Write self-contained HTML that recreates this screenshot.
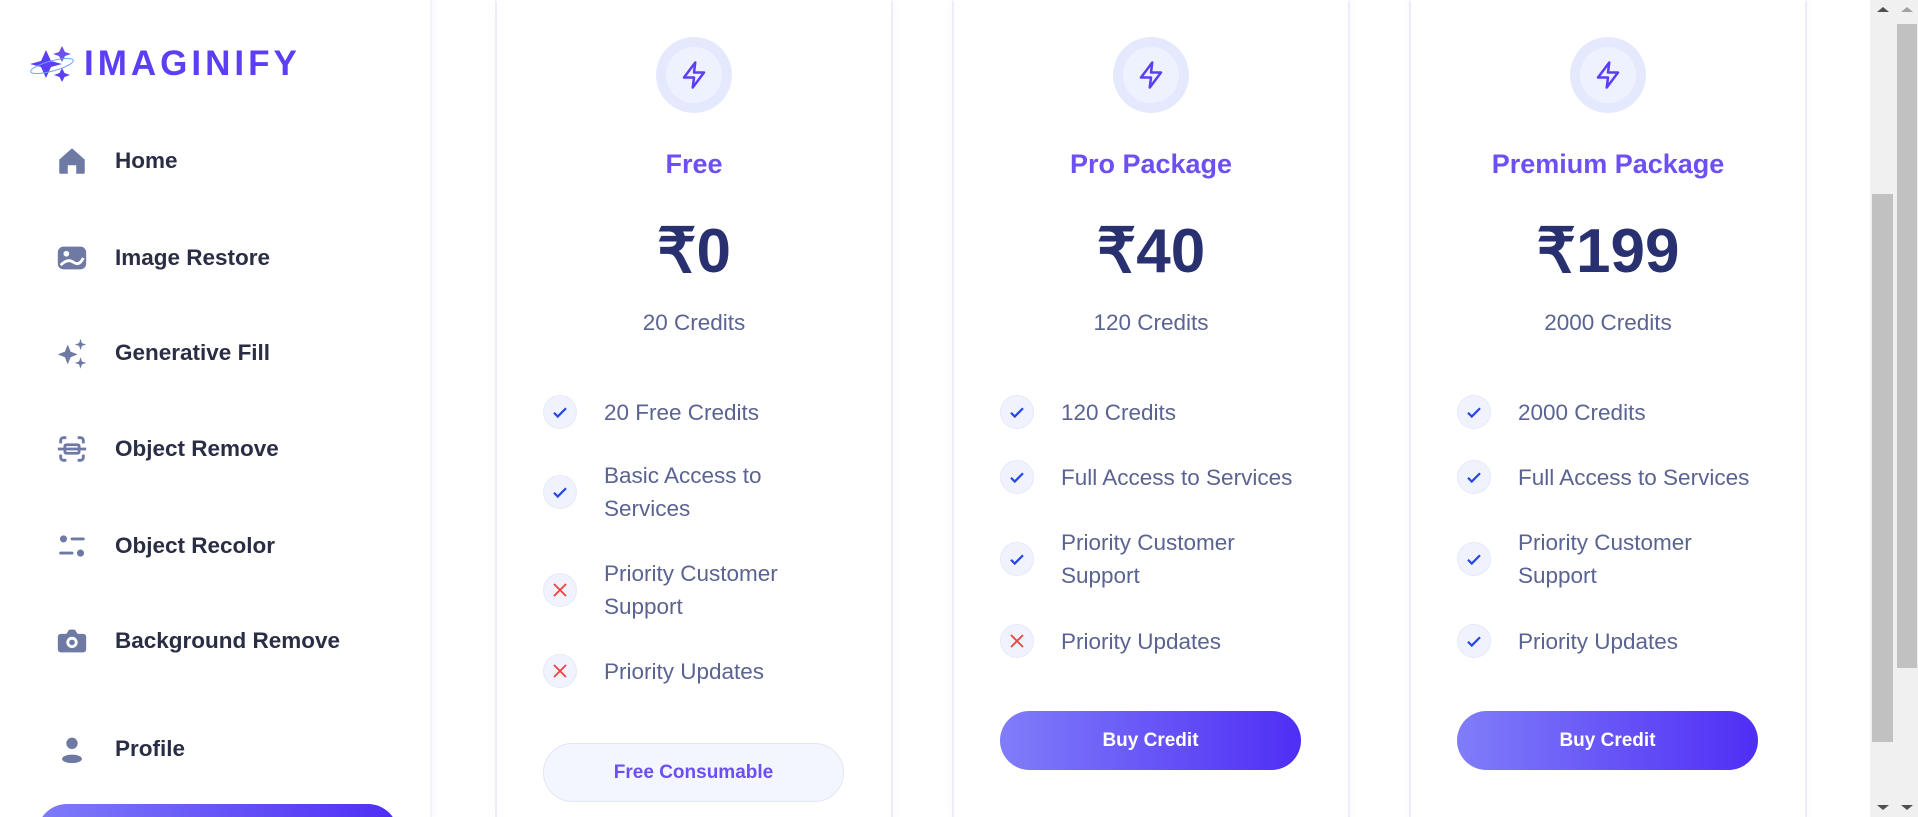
<!DOCTYPE html>
<html><head><meta charset="utf-8">
<style>
*{box-sizing:border-box;margin:0;padding:0}
html,body{width:1918px;height:817px;overflow:hidden}
body{background:#fff;font-family:"Liberation Sans",sans-serif}
#root{position:relative;width:1918px;height:817px;overflow:hidden}
.side{position:absolute;left:0;top:0;width:432px;height:817px;background:#fff;border-right:2px solid #f3f2fc;box-shadow:2px 0 6px rgba(120,110,220,.06);overflow:hidden}
.logo{position:absolute;left:30px;top:44px;display:flex;align-items:center}
.logo span{font-size:35px;font-weight:bold;color:#5b3ff5;margin-left:10px;letter-spacing:4px}
.nav{position:absolute;left:55px;display:flex;align-items:center;font-size:22.5px;font-weight:bold;color:#2a2e45}
.nav svg{width:34px;height:34px;margin-right:26px}
.gbtn{position:absolute;left:37px;top:804px;width:361px;height:13px;display:block}
.card{position:absolute;top:0;width:398px;height:817px;border:2px solid #eeecfc;border-top:2px solid transparent;border-bottom:none;background:#fff;box-shadow:0 0 10px rgba(120,110,220,.05);overflow:hidden}
.ic{position:absolute;left:159px;top:35px;width:76px;height:76px;border-radius:50%;background:#e5e9fd}
.ic div{position:absolute;left:10px;top:10px;width:56px;height:56px;border-radius:50%;background:#eef1fe;display:flex;align-items:center;justify-content:center}
.t{position:absolute;left:0;width:100%;text-align:center}
.title{top:147px;font-size:27px;font-weight:bold;color:#6d4ff3}
.price{top:212px;font-size:62px;font-weight:bold;color:#283070}
.cred{top:308px;font-size:22.5px;color:#5a6391}
.f{position:absolute;left:46px;display:flex;align-items:center;font-size:22.5px;color:#5a6391;line-height:33px}
.f .b{width:34px;height:34px;border-radius:50%;background:#f0f2fd;border:1px solid #e6e9fa;margin-right:27px;flex:none;display:flex;align-items:center;justify-content:center}
.btn{position:absolute;left:46px;width:301px;height:59px;border-radius:30px;display:flex;align-items:center;justify-content:center;font-size:19px;font-weight:bold}
.buy{background:linear-gradient(90deg,#807df9,#4f2ef5);color:#fff}
.fc{background:#f4f6fd;border:1px solid #e2e5f6;color:#6b4ff4}
.sb{position:absolute;top:0;height:817px;background:#f0f0f0}
</style></head><body><div id="root">
<div class="side">
 <div class="logo">
  <svg width="44" height="40" viewBox="0 0 44 40"><path d="M16 6 L21 17 L32 20 L21 23 L16 34 L11 23 L0 20 L11 17Z" fill="#5b3ff5"/><path d="M32 2 L35 8 L41 10 L35 12 L32 18 L29 12 L23 10 L29 8Z" fill="#6d4ff3"/><path d="M32 24 L34.5 29 L40 31 L34.5 33 L32 38 L29.5 33 L24 31 L29.5 29Z" fill="#5b3ff5"/><ellipse cx="22" cy="22" rx="22" ry="5" fill="none" stroke="#6fa0ff" stroke-width="1" transform="rotate(-15 22 22)"/></svg>
  <span>IMAGINIFY</span>
 </div>
 <div class="nav" style="top:144px"><svg viewBox="0 0 24 24"><path d="M3 11 L12 3 L21 11 V20 a1 1 0 0 1-1 1 H15 V15 H9 V21 H4 a1 1 0 0 1-1-1Z" fill="#6e7aa4"/></svg>Home</div>
 <div class="nav" style="top:241px"><svg viewBox="0 0 24 24"><rect x="2" y="4" width="20" height="16" rx="4" fill="#6e7aa4"/><circle cx="8" cy="9" r="2" fill="#fff"/><path d="M4 17 Q9 12 13 15 Q17 18 20 12" stroke="#fff" stroke-width="2" fill="none"/></svg>Image Restore</div>
 <div class="nav" style="top:336px"><svg viewBox="0 0 24 24"><path d="M9 6 L11 11 L16 13 L11 15 L9 20 L7 15 L2 13 L7 11Z M18 2 L19 5 L22 6 L19 7 L18 10 L17 7 L14 6 L17 5Z M18 15 L19 18 L22 19 L19 20 L18 23 L17 20 L14 19 L17 18Z" fill="#6e7aa4"/></svg>Generative Fill</div>
 <div class="nav" style="top:432px"><svg viewBox="0 0 24 24" fill="none" stroke="#6e7aa4" stroke-width="2"><path d="M4 8 V6 a2 2 0 0 1 2-2 H8 M16 4 H18 a2 2 0 0 1 2 2 V8 M4 16 V18 a2 2 0 0 0 2 2 H8 M16 20 H18 a2 2 0 0 0 2-2 V16 M2 12 H22"/><rect x="7" y="9" width="10" height="6" rx="1"/></svg>Object Remove</div>
 <div class="nav" style="top:529px"><svg viewBox="0 0 24 24" fill="#6e7aa4"><circle cx="6" cy="7" r="2.5"/><rect x="11" y="6" width="10" height="2" rx="1"/><rect x="3" y="16" width="10" height="2" rx="1"/><circle cx="18" cy="17" r="2.5"/></svg>Object Recolor</div>
 <div class="nav" style="top:624px"><svg viewBox="0 0 24 24"><path d="M4 7 H8 L10 4 H14 L16 7 H20 a2 2 0 0 1 2 2 V18 a2 2 0 0 1-2 2 H4 a2 2 0 0 1-2-2 V9 a2 2 0 0 1 2-2Z" fill="#6e7aa4"/><circle cx="12" cy="13" r="3" fill="none" stroke="#fff" stroke-width="2"/></svg>Background Remove</div>
 <div class="nav" style="top:732px"><svg viewBox="0 0 24 24" fill="#6e7aa4"><circle cx="12" cy="8" r="4"/><ellipse cx="12" cy="19" rx="7" ry="3"/></svg>Profile</div>
 <svg class="gbtn" viewBox="0 0 361 13"><defs><linearGradient id="g" x1="0" x2="1"><stop offset="0" stop-color="#7f7cf9"/><stop offset="1" stop-color="#4f2ef5"/></linearGradient></defs><rect x="0" y="0" width="361" height="60" rx="30" fill="url(#g)"/></svg>
</div>

<div class="card" style="left:495px">
 <div class="ic"><div><svg width="30" height="30" viewBox="0 0 24 24" fill="none" stroke="#5b3ff5" stroke-width="2" stroke-linejoin="round"><path d="M13 2 L4 14 H12 L11 22 L20 10 H12Z"/></svg></div></div>
 <div class="t title">Free</div>
 <div class="t price">₹0</div>
 <div class="t cred">20 Credits</div>
 <div class="f" style="top:393px"><div class="b"><svg width="18" height="18" viewBox="0 0 24 24" fill="none" stroke="#2546e8" stroke-width="3"><path d="M4 13 L9 18 L20 7"/></svg></div>20 Free Credits</div>
 <div class="f" style="top:457px"><div class="b"><svg width="18" height="18" viewBox="0 0 24 24" fill="none" stroke="#2546e8" stroke-width="3"><path d="M4 13 L9 18 L20 7"/></svg></div>Basic Access to<br>Services</div>
 <div class="f" style="top:555px"><div class="b"><svg width="18" height="18" viewBox="0 0 24 24" fill="none" stroke="#f04444" stroke-width="2.5"><path d="M4 4 L20 20 M20 4 L4 20"/></svg></div>Priority Customer<br>Support</div>
 <div class="f" style="top:652px"><div class="b"><svg width="18" height="18" viewBox="0 0 24 24" fill="none" stroke="#f04444" stroke-width="2.5"><path d="M4 4 L20 20 M20 4 L4 20"/></svg></div>Priority Updates</div>
 <div class="btn fc" style="top:741px">Free Consumable</div>
</div>

<div class="card" style="left:952px">
 <div class="ic"><div><svg width="30" height="30" viewBox="0 0 24 24" fill="none" stroke="#5b3ff5" stroke-width="2" stroke-linejoin="round"><path d="M13 2 L4 14 H12 L11 22 L20 10 H12Z"/></svg></div></div>
 <div class="t title">Pro Package</div>
 <div class="t price">₹40</div>
 <div class="t cred">120 Credits</div>
 <div class="f" style="top:393px"><div class="b"><svg width="18" height="18" viewBox="0 0 24 24" fill="none" stroke="#2546e8" stroke-width="3"><path d="M4 13 L9 18 L20 7"/></svg></div>120 Credits</div>
 <div class="f" style="top:458px"><div class="b"><svg width="18" height="18" viewBox="0 0 24 24" fill="none" stroke="#2546e8" stroke-width="3"><path d="M4 13 L9 18 L20 7"/></svg></div>Full Access to Services</div>
 <div class="f" style="top:524px"><div class="b"><svg width="18" height="18" viewBox="0 0 24 24" fill="none" stroke="#2546e8" stroke-width="3"><path d="M4 13 L9 18 L20 7"/></svg></div>Priority Customer<br>Support</div>
 <div class="f" style="top:622px"><div class="b"><svg width="18" height="18" viewBox="0 0 24 24" fill="none" stroke="#f04444" stroke-width="2.5"><path d="M4 4 L20 20 M20 4 L4 20"/></svg></div>Priority Updates</div>
 <div class="btn buy" style="top:709px">Buy Credit</div>
</div>

<div class="card" style="left:1409px">
 <div class="ic"><div><svg width="30" height="30" viewBox="0 0 24 24" fill="none" stroke="#5b3ff5" stroke-width="2" stroke-linejoin="round"><path d="M13 2 L4 14 H12 L11 22 L20 10 H12Z"/></svg></div></div>
 <div class="t title">Premium Package</div>
 <div class="t price">₹199</div>
 <div class="t cred">2000 Credits</div>
 <div class="f" style="top:393px"><div class="b"><svg width="18" height="18" viewBox="0 0 24 24" fill="none" stroke="#2546e8" stroke-width="3"><path d="M4 13 L9 18 L20 7"/></svg></div>2000 Credits</div>
 <div class="f" style="top:458px"><div class="b"><svg width="18" height="18" viewBox="0 0 24 24" fill="none" stroke="#2546e8" stroke-width="3"><path d="M4 13 L9 18 L20 7"/></svg></div>Full Access to Services</div>
 <div class="f" style="top:524px"><div class="b"><svg width="18" height="18" viewBox="0 0 24 24" fill="none" stroke="#2546e8" stroke-width="3"><path d="M4 13 L9 18 L20 7"/></svg></div>Priority Customer<br>Support</div>
 <div class="f" style="top:622px"><div class="b"><svg width="18" height="18" viewBox="0 0 24 24" fill="none" stroke="#2546e8" stroke-width="3"><path d="M4 13 L9 18 L20 7"/></svg></div>Priority Updates</div>
 <div class="btn buy" style="top:709px">Buy Credit</div>
</div>

<div class="sb" style="left:1870px;width:48px"></div>
<div style="position:absolute;left:1872px;top:194px;width:21px;height:548px;background:#c1c1c1"></div>
<div style="position:absolute;left:1897px;top:24px;width:20px;height:644px;background:#c1c1c1"></div>
<div style="position:absolute;left:1877px;top:7px;width:0;height:0;border-left:6px solid transparent;border-right:6px solid transparent;border-bottom:5px solid #505050"></div>
<div style="position:absolute;left:1901px;top:7px;width:0;height:0;border-left:6px solid transparent;border-right:6px solid transparent;border-bottom:5px solid #a3a3a3"></div>
<div style="position:absolute;left:1877px;top:805px;width:0;height:0;border-left:6px solid transparent;border-right:6px solid transparent;border-top:5px solid #505050"></div>
<div style="position:absolute;left:1901px;top:805px;width:0;height:0;border-left:6px solid transparent;border-right:6px solid transparent;border-top:5px solid #505050"></div>
</div></body></html>
